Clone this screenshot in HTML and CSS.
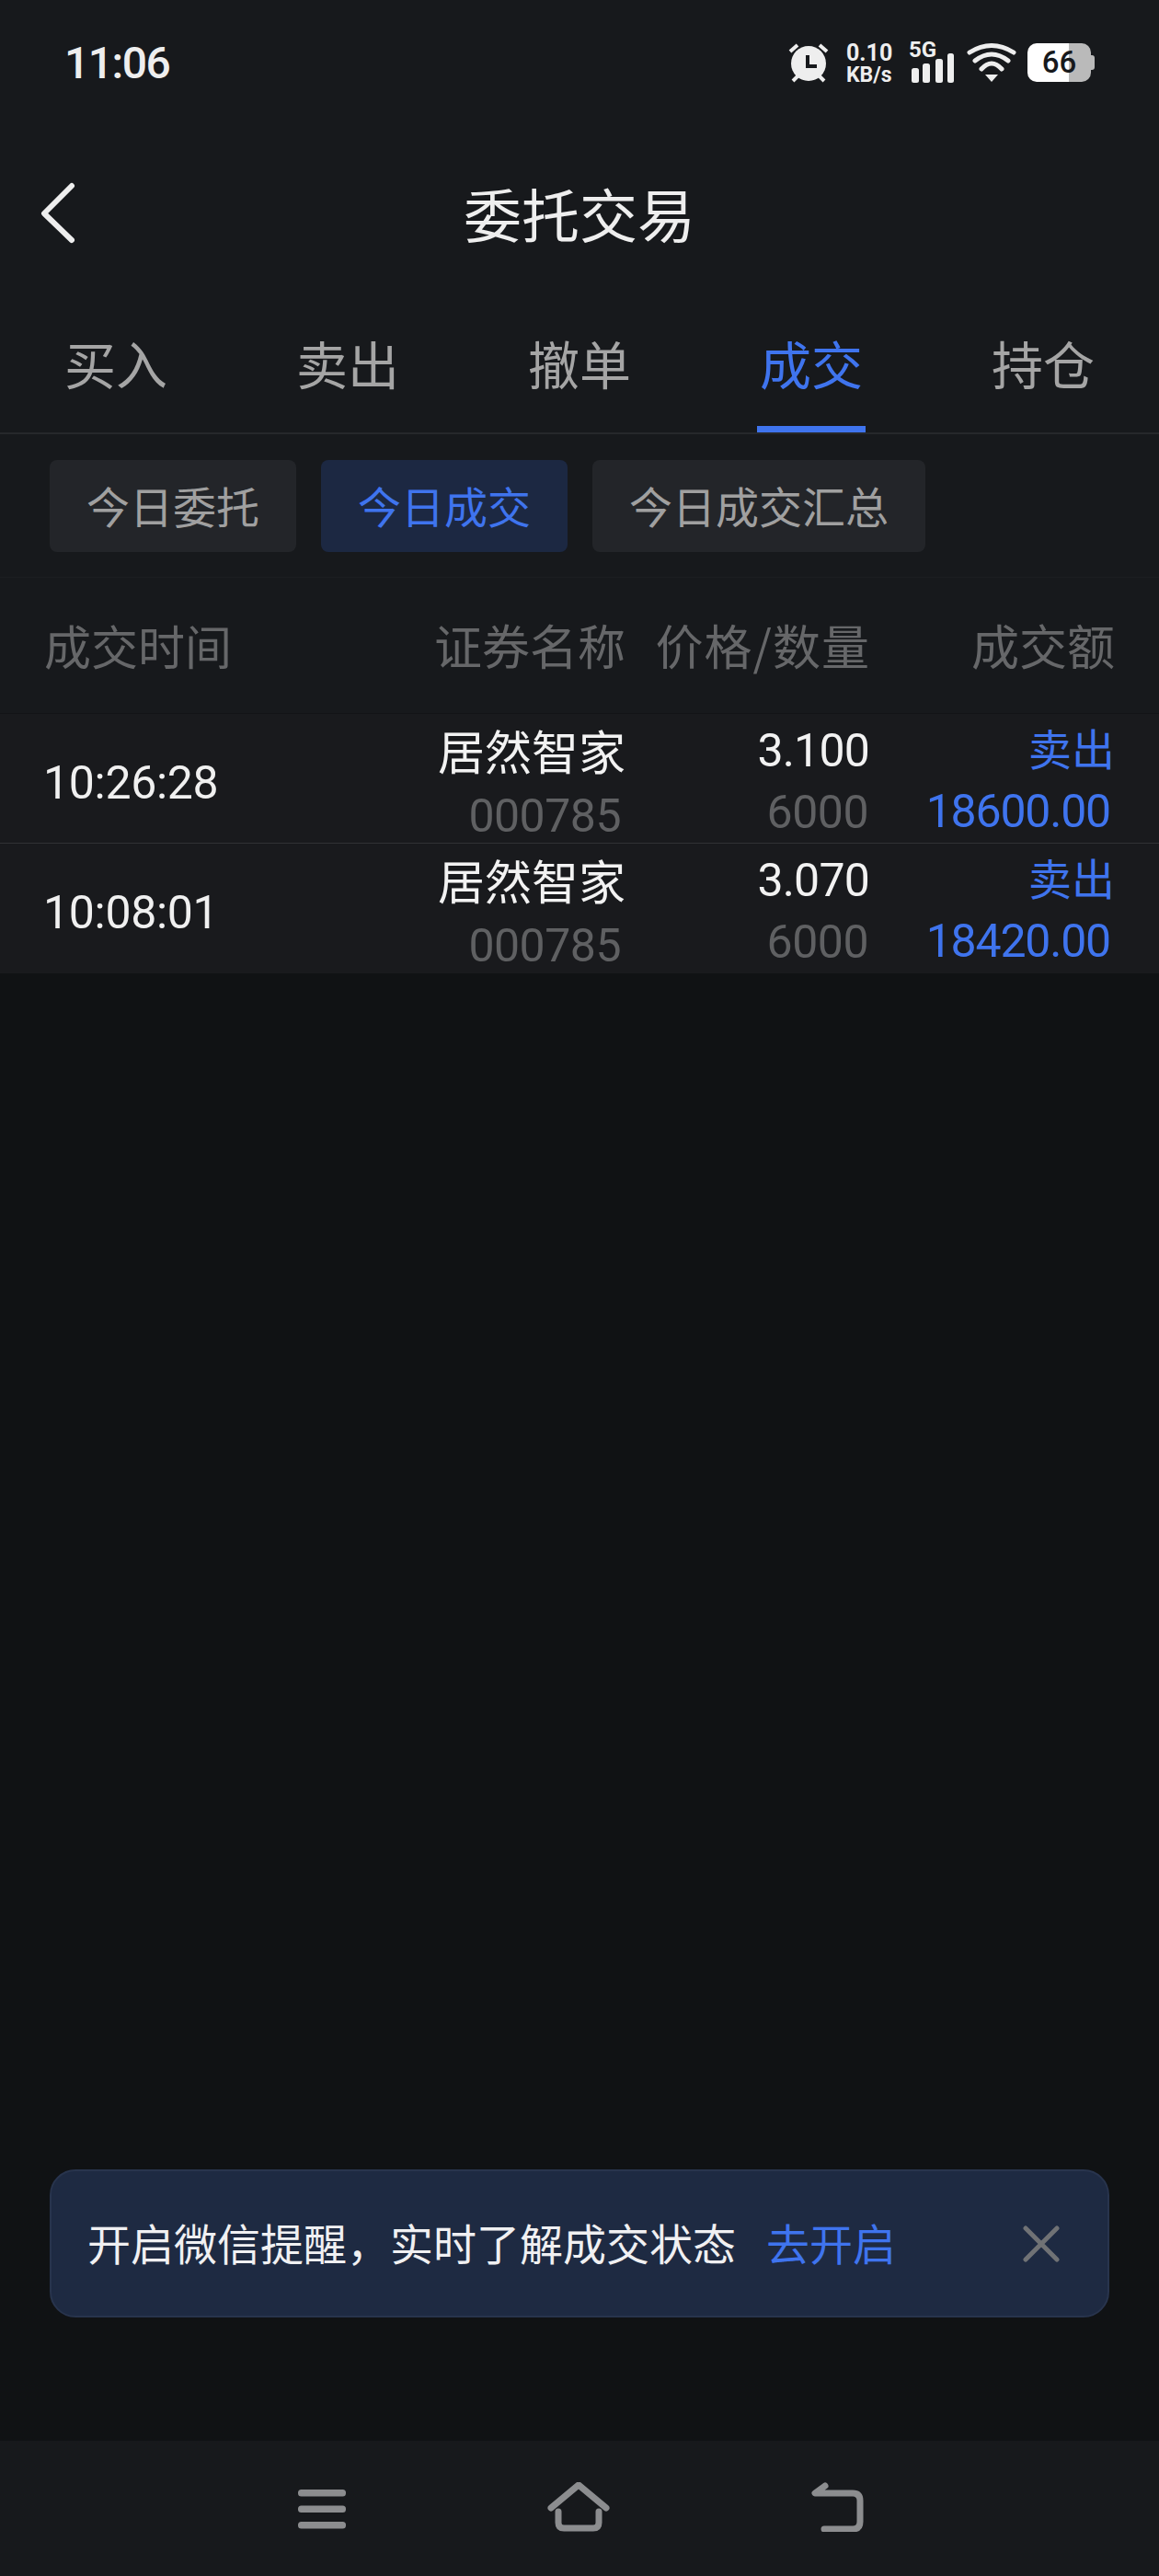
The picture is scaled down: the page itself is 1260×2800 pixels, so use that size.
FILE: index.html
```html
<!DOCTYPE html>
<html lang="zh-CN">
<head>
    <meta charset="UTF-8">
    <meta name="viewport" content="width=device-width, initial-scale=1.0">
    <title>委托交易</title>
    <link rel="stylesheet" href="styles.css">
</head>
<body>
    <div class="app">
        <!-- Status bar -->
        <div class="status-bar">
            <span class="status-time">11:06</span>
            <div class="status-icons">
                <svg class="icon-alarm" width="48" height="46" viewBox="0 0 48 46">
                    <circle cx="24" cy="24" r="19" fill="#eeeeee"/>
                    <path d="M4 11L12 4M36 4L44 11M7 43L12 38M41 43L36 38" stroke="#eeeeee" stroke-width="4" fill="none"/>
                    <path d="M23 15V27H33" stroke="#17191c" stroke-width="4" fill="none"/>
                </svg>
                <div class="net-speed">
                    <span class="speed-value">0.10</span>
                    <span class="speed-unit">KB/s</span>
                </div>
                <div class="signal">
                    <span class="signal-label">5G</span>
                    <svg width="49" height="44" viewBox="0 0 49 44" fill="#eeeeee">
                        <rect x="3" y="28" width="8" height="16" rx="2.5"/>
                        <rect x="15" y="23" width="8" height="21" rx="2.5"/>
                        <rect x="29" y="18" width="8" height="26" rx="2.5"/>
                        <rect x="42" y="12" width="7" height="32" rx="2.5"/>
                    </svg>
                </div>
                <svg class="icon-wifi" width="58" height="48" viewBox="0 0 58 48" fill="none">
                    <path d="M5 13Q29 -2 53 13M11 22Q29 8 47 22M18 31Q29 19 40 31" stroke="#eeeeee" stroke-width="5" stroke-linecap="round"/>
                    <path d="M22 37H36L29 45Z" fill="#eeeeee"/>
                </svg>
                <div class="battery">66</div>
            </div>
        </div>

        <!-- Title -->
        <div class="title-bar">
            <svg class="back-icon" width="48" height="78" viewBox="0 0 48 78" fill="none">
                <path d="M42 9L12 39L42 68" stroke="#eeeeee" stroke-width="6" stroke-linecap="round" stroke-linejoin="round"/>
            </svg>
            <h1 class="title">委托交易</h1>
        </div>

        <!-- Tabs -->
        <div class="tabs">
            <div class="tab"><span>买入</span></div>
            <div class="tab"><span>卖出</span></div>
            <div class="tab"><span>撤单</span></div>
            <div class="tab active"><span>成交</span></div>
            <div class="tab"><span>持仓</span></div>
        </div>

        <!-- Filters -->
        <div class="chips">
            <div class="chip">今日委托</div>
            <div class="chip active">今日成交</div>
            <div class="chip">今日成交汇总</div>
        </div>

        <!-- Trades table -->
        <div class="table-head row-grid">
            <div class="head-time">成交时间</div>
            <div class="cell-right">证券名称</div>
            <div class="cell-right head-price">价格/数量</div>
            <div class="cell-right">成交额</div>
        </div>
        <div class="table-body">
            <div class="table-row row-grid">
                <div class="cell-time">10:26:28</div>
                <div class="cell-right">
                    <div class="stock-name">居然智家</div>
                    <div class="stock-code">000785</div>
                </div>
                <div class="cell-right">
                    <div class="price">3.100</div>
                    <div class="quantity">6000</div>
                </div>
                <div class="cell-right">
                    <div class="side">卖出</div>
                    <div class="amount">18600.00</div>
                </div>
            </div>
            <div class="table-row row-grid">
                <div class="cell-time">10:08:01</div>
                <div class="cell-right">
                    <div class="stock-name">居然智家</div>
                    <div class="stock-code">000785</div>
                </div>
                <div class="cell-right">
                    <div class="price">3.070</div>
                    <div class="quantity">6000</div>
                </div>
                <div class="cell-right">
                    <div class="side">卖出</div>
                    <div class="amount">18420.00</div>
                </div>
            </div>
        </div>

        <!-- Empty area with the WeChat notice -->
        <div class="content">
            <div class="notice">
                <span class="notice-text">开启微信提醒，实时了解成交状态</span>
                <span class="notice-link">去开启</span>
                <svg class="notice-close" width="40" height="40" viewBox="0 0 40 40" fill="none">
                    <path d="M3 3L37 37M37 3L3 37" stroke="#707275" stroke-width="5" stroke-linecap="round"/>
                </svg>
            </div>
        </div>

        <!-- System navigation -->
        <div class="nav-bar">
            <svg class="nav-menu" width="54" height="46" viewBox="0 0 54 46" fill="#8c8d8f">
                <rect x="1" y="0" width="52" height="7.5" rx="3.5"/>
                <rect x="1" y="17.5" width="52" height="7.5" rx="3.5"/>
                <rect x="1" y="35" width="52" height="7.5" rx="3.5"/>
            </svg>
            <svg width="70" height="54" viewBox="0 0 70 54" fill="none" stroke="#8c8d8f" stroke-width="7" stroke-linecap="round" stroke-linejoin="round">
                <path d="M5 28L35 3L65 28" />
                <path d="M13 32V44Q13 50 19 50H51Q57 50 57 44V32"/>
            </svg>
            <svg width="60" height="54" viewBox="0 0 60 54" fill="none" stroke="#8c8d8f" stroke-width="7" stroke-linecap="round" stroke-linejoin="round">
                <path d="M16 4L5 12H46Q54 12 54 20V43Q54 51 46 51H15"/>
            </svg>
        </div>
    </div>
</body>
</html>
```

FILE: styles.css
```css
/* Reset and base styles */
* {
    margin: 0;
    padding: 0;
    box-sizing: border-box;
}

body {
    background-color: #101214;
    font-family: 'Noto Sans CJK SC', 'Noto Sans', sans-serif;
}

.app {
    display: flex;
    flex-direction: column;
    width: 1260px;
    height: 2800px;
    background-color: #17191c;
}

/* Status bar */
.status-bar {
    display: flex;
    justify-content: space-between;
    align-items: center;
    height: 136px;
    padding: 0 70px 0 70px;
    color: #eeeeee;
}

.status-time {
    font-family: Roboto, sans-serif;
    font-size: 48px;
    font-weight: 500;
    letter-spacing: -1.5px;
}

.status-icons {
    display: flex;
    align-items: center;
}

.icon-alarm {
    margin-right: 17px;
}

.net-speed {
    display: flex;
    flex-direction: column;
    width: 53px;
    margin-right: 15px;
    font-family: Roboto, sans-serif;
    font-weight: 700;
}

.speed-value {
    font-size: 25px;
    line-height: 26px;
}

.speed-unit {
    font-size: 23px;
    line-height: 21px;
}

.signal {
    position: relative;
    width: 49px;
    height: 44px;
    margin-right: 12px;
}

.signal-label {
    position: absolute;
    top: -4px;
    left: 0;
    font-family: Roboto, sans-serif;
    font-size: 24px;
    font-weight: 700;
    line-height: 24px;
}

.icon-wifi {
    margin-right: 10px;
}

.battery {
    position: relative;
    width: 69px;
    height: 42px;
    margin-right: 4px;
    border-radius: 10px;
    background: linear-gradient(to right, #ffffff 65%, #bababa 65%);
    color: #17191c;
    font-family: Roboto, sans-serif;
    font-size: 33px;
    font-weight: 500;
    line-height: 42px;
    text-align: center;
}

.battery::after {
    content: '';
    position: absolute;
    top: 13px;
    right: -4px;
    width: 4px;
    height: 16px;
    border-radius: 0 3px 3px 0;
    background-color: #bababa;
}

/* Title */
.title-bar {
    position: relative;
    display: flex;
    justify-content: center;
    align-items: center;
    height: 192px;
    padding-bottom: 3px;
}

.back-icon {
    position: absolute;
    top: 57px;
    left: 36px;
}

.title {
    color: #eeeeee;
    font-size: 63px;
    font-weight: 400;
}

/* Tabs */
.tabs {
    display: flex;
    height: 144px;
    border-bottom: 2px solid #26282b;
}

.tab {
    display: flex;
    flex: 1;
    justify-content: center;
    color: #a5a5a5;
    font-size: 56px;
    line-height: 132px;
}

.tab span {
    width: 118px;
    height: 142px;
    text-align: center;
    white-space: nowrap;
}

.tab.active {
    color: #3f74ee;
}

.tab.active span {
    border-bottom: 7px solid #3f74ee;
}

/* Filter chips */
.chips {
    display: flex;
    gap: 27px;
    padding: 28px 54px 27px;
}

.chip {
    height: 100px;
    padding: 0 40px;
    border-radius: 8px;
    background-color: #232529;
    color: #a0a0a0;
    font-size: 47px;
    line-height: 98px;
}

.chip.active {
    background-color: #1c2842;
    color: #3f74ee;
}

/* Table */
.row-grid {
    display: grid;
    grid-template-columns: 300px 332px 266px 266px;
    padding: 0 48px;
}

.cell-right {
    text-align: right;
}

.table-head {
    height: 149px;
    border-top: 1px solid #1c1e21;
    border-bottom: 1px solid #121316;
    color: #666769;
    font-size: 52px;
    line-height: 146px;
}

.head-time {
    font-size: 51px;
}

.head-price {
    letter-spacing: 1px;
}

.table-row {
    height: 141px;
    border-bottom: 1px solid #303235;
    background-color: #191a1d;
    font-family: Roboto, 'Noto Sans CJK SC', sans-serif;
}

.table-row:last-child {
    border-bottom: none;
}

.cell-time {
    align-self: center;
    margin-left: -1px;
    padding-top: 3px;
    color: #f0f0f0;
    font-size: 50px;
    letter-spacing: -0.3px;
}

.stock-name {
    height: 70px;
    padding-top: 4px;
    color: #f2f2f2;
    font-family: 'Noto Sans CJK SC', sans-serif;
    font-size: 51px;
    line-height: 70px;
}

.stock-code {
    padding-right: 5px;
    padding-top: 6px;
    color: #5f6062;
    font-size: 50px;
    letter-spacing: -0.5px;
    line-height: 70px;
}

.price {
    height: 66px;
    padding: 7px 1px 0 0;
    color: #f2f2f2;
    font-size: 50px;
    letter-spacing: -0.8px;
    line-height: 66px;
}

.quantity {
    padding: 8px 2px 0 0;
    color: #5f6062;
    font-size: 50px;
    letter-spacing: -0.5px;
    line-height: 66px;
}

.side {
    height: 66px;
    padding-top: 3px;
    color: #3f74ee;
    font-family: 'Noto Sans CJK SC', sans-serif;
    font-size: 47px;
    line-height: 66px;
}

.amount {
    padding: 7px 5px 0 0;
    color: #3f74ee;
    font-size: 50px;
    letter-spacing: -1.2px;
    line-height: 66px;
}

/* Notice */
.content {
    display: flex;
    flex: 1;
    align-items: flex-end;
    padding: 0 54px 134px;
    background-color: #101214;
}

.notice {
    display: flex;
    flex: 1;
    align-items: center;
    height: 161px;
    padding: 0 52px 5px 39px;
    border: 2px solid #28344d;
    border-radius: 28px;
    background-color: #1e2a42;
    font-size: 47px;
}

.notice-text {
    color: #f0f0f2;
}

.notice-link {
    margin-left: 33px;
    color: #3f74ee;
}

.notice-close {
    margin-top: 5px;
    margin-left: auto;
}

/* Bottom navigation */
.nav-bar {
    display: flex;
    flex-shrink: 0;
    justify-content: space-between;
    align-items: flex-start;
    height: 147px;
    padding: 45px 319px 0 323px;
    background-color: #17191c;
}

.nav-menu {
    margin-top: 8px;
}
```
